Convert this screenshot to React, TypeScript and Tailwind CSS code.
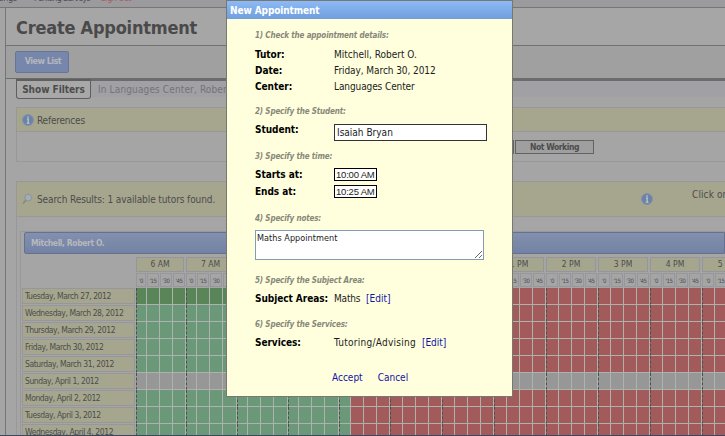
import { clsx } from "clsx";

const hours = [
  { label: "6 AM", cells: [11, 13, 13, 13] },
  { label: "7 AM", cells: [11, 13, 13, 14] },
  { label: "8 AM", cells: [11, 13, 13, 14] },
  { label: "9 AM", cells: [11, 13, 13, 14] },
  { label: "10 AM", cells: [12, 13, 13, 13] },
  { label: "11 AM", cells: [13, 13, 13, 13] },
  { label: "12 PM", cells: [13, 13, 13, 13] },
  { label: "1 PM", cells: [13, 13, 13, 13] },
  { label: "2 PM", cells: [13, 13, 13, 13] },
  { label: "3 PM", cells: [13, 13, 13, 13] },
  { label: "4 PM", cells: [13, 13, 13, 13] },
  { label: "5 PM", cells: [13, 13, 13, 13] },
];

const minutes = ["'0", "'15", "'30", "'45"];

const days = [
  "Tuesday, March 27, 2012",
  "Wednesday, March 28, 2012",
  "Thursday, March 29, 2012",
  "Friday, March 30, 2012",
  "Saturday, March 31, 2012",
  "Sunday, April 1, 2012",
  "Monday, April 2, 2012",
  "Tuesday, April 3, 2012",
  "Wednesday, April 4, 2012",
];

// availability ends after the first slot of 10 AM
function slotColor(day: number, slot: number) {
  if (day === 5) return "bg-[#979797]";
  if (slot > 16) return "bg-[#a35a5a]";
  return day === 0 ? "bg-[#5a8559]" : "bg-[#6a9878]";
}

export default function App() {
  return (
    <div className="relative h-[436px] w-[725px] overflow-hidden bg-[#a5a5a5] font-['DejaVu_Sans_Condensed','DejaVu_Sans',sans-serif] text-[10px] text-[#4c4c4c]">
      <div className="flex h-full flex-col">
        <nav className="flex h-[7px] shrink-0 items-end overflow-hidden bg-[#9b9b9e] text-[9px] leading-[12px]">
          <div className="flex pb-[3px] whitespace-nowrap">
            <span className="-ml-[14px] w-[48px] tracking-[-0.3px]">Settings</span>
            <span className="w-[67px] tracking-[-0.75px]">Pending Surveys</span>
            <span className="tracking-[-0.6px] text-[#a85c60]">Sign Out</span>
          </div>
        </nav>

        <div className="flex min-h-0 flex-1 flex-col border-t border-[#767676] pl-[5px]">
          <div className="flex min-h-0 flex-1 flex-col border-l border-[#767676]">
            <h1 className="flex h-[38px] shrink-0 items-center border-b border-[#707070] bg-[#a6a6a6] pt-px pl-[10px] text-[18px] font-bold tracking-[-0.22px] text-[#4a4a4a]">
              Create Appointment
            </h1>
            <div className="flex h-[32px] shrink-0 items-start bg-[#a0a0a0] pt-[5px] pl-[9px]">
              <button className="flex h-[22px] w-[54px] items-center justify-center rounded-[2px] border border-[#667598] bg-[#7787ac] pl-[2px] text-[9px] font-bold tracking-[-0.55px] text-[#b4b6bc]">
                View List
              </button>
            </div>

            <div className="flex min-h-0 flex-1 flex-col border-t border-[#6c6c6c] pl-[10px]">
              <FilterBar />
              <References />
              <Results />
            </div>
          </div>
        </div>
      </div>

      <AppointmentDialog />
      <div className="absolute inset-x-0 bottom-0 h-px bg-[#3a4568]" />
    </div>
  );
}

function FilterBar() {
  return (
    <div className="flex h-[20px] shrink-0 items-start">
      <div className="flex h-full w-[75px] shrink-0 items-center justify-center rounded-b-[3px] border border-t-2 border-[#5f5f5f] bg-[#a8a8a8] pb-px font-bold tracking-[-0.03px]">
        Show Filters
      </div>
      <div className="flex h-[18px] flex-1 items-center overflow-hidden border-t-2 border-[#6c6c6c] bg-[#a0a0a5] pt-px pl-[7px] tracking-[0.13px] whitespace-nowrap text-[#747476]">
        In Languages Center, Robert O. Mitchell
      </div>
    </div>
  );
}

function References() {
  return (
    <div className="mt-[8px] h-[55px] shrink-0 border-y border-l border-[#98989a]">
      <div className="flex h-[24px] items-center gap-[3px] border-b border-[#98989a] bg-[#a6a68e] pt-px pl-[5px]">
        <InfoIcon />
        <span className="tracking-[-0.2px]">References</span>
      </div>
      <div className="flex h-[30px] items-start pt-[8px] pl-[376px]">
        <div className="flex h-[14px] w-[120px] gap-px">
          <div className="w-[121px] shrink-0 border border-[#626262]" />
          <div className="flex w-[79px] shrink-0 items-center justify-center border border-[#626262] bg-[#9f9f9f] text-[8.5px] font-bold tracking-[-0.45px]">
            Not Working
          </div>
        </div>
      </div>
    </div>
  );
}

function Results() {
  return (
    <div className="mt-[19px] flex min-h-0 flex-1 flex-col border-t border-l border-[#98989a]">
      <div className="flex h-[35px] shrink-0 items-center border-b border-[#98989a] bg-[#a6a68e] pl-[4px]">
        <SearchIcon />
        <span className="ml-[4px] w-[604px] shrink-0 tracking-[-0.1px] whitespace-nowrap">
          Search Results: 1 available tutors found.
        </span>
        <InfoIcon />
        <span className="mb-[10px] ml-[39px] shrink-0 tracking-[0.1px] whitespace-nowrap">Click on</span>
      </div>
      <div className="mt-[14px] ml-[3px] flex min-h-0 flex-1 flex-col border-t border-l border-[#98989a]">
        <div className="ml-[3px] flex h-[22px] shrink-0 items-center rounded-l-[2px] border border-[#65718f] bg-linear-to-b from-[#8390ae] to-[#7382a4] pl-[6px] text-[8.5px] font-bold tracking-[-0.4px] text-[#b6b8be]">
          Mitchell, Robert O.
        </div>
        <Schedule />
      </div>
    </div>
  );
}

function Schedule() {
  return (
    <div className="mt-[3px] ml-px w-[740px] shrink-0 text-[8.5px]">
      <div className="flex pl-[114px]">
        {hours.map((h) => (
          <div key={h.label}>
            <div className="mr-[2px] flex h-[15px] items-center justify-center border border-[#96969a] bg-[#a6a68e]">
              {h.label}
            </div>
            <div className="flex h-[16px] pt-px">
              {h.cells.map((w, i) => (
                <div key={i} style={{ width: w }} className="pr-px">
                  <div className="flex h-[14px] items-center justify-center border border-[#96969b] text-[6px] tracking-[-0.5px]">
                    {minutes[i]}
                  </div>
                </div>
              ))}
            </div>
          </div>
        ))}
      </div>
      {days.map((day, d) => (
        <div key={day} className="flex h-[17px]">
          <div className="w-[114px] pr-px pb-px">
            <div className="flex h-[16px] items-center border border-[#96969b] bg-[#a6a68e] pl-[2px] tracking-[-0.42px] whitespace-nowrap">
              {day}
            </div>
          </div>
          {hours.map((h, hi) =>
            h.cells.map((w, i) => (
              <div
                key={hi + "-" + i}
                style={{ width: w }}
                className={clsx(
                  "shrink-0 border-r border-b border-b-[#adb2ad] border-r-[#adb2ad]",
                  i === 0 && "border-l border-l-[#4b504b] [border-left-style:dashed]",
                  slotColor(d, hi * 4 + i)
                )}
              />
            ))
          )}
        </div>
      ))}
    </div>
  );
}

function AppointmentDialog() {
  return (
    <div className="absolute top-0 left-[226px] flex h-[397px] w-[287px] flex-col border border-[#77796f] bg-[#ffffdd] leading-[16px] text-[#1c1c1c]">
      <div className="flex h-[18px] shrink-0 items-center bg-linear-to-b from-[#8dbaf6] to-[#6f9fdc] pt-px pl-[3px] font-bold tracking-[-0.1px] text-white">
        New Appointment
      </div>
      <div className="flex flex-1 flex-col pl-[28px]">
        <Step className="mt-[9px]">1) Check the appointment details:</Step>
        <div className="mt-[3px]">
          <Field label="Tutor:">Mitchell, Robert O.</Field>
          <Field label="Date:">
            <span className="tracking-[-0.07px]">Friday, March 30, 2012</span>
          </Field>
          <Field label="Center:">
            <span className="tracking-[-0.1px]">Languages Center</span>
          </Field>
        </div>

        <Step className="mt-[9px]">2) Specify the Student:</Step>
        <div className="mt-[2px]">
          <Field label="Student:">
            <div className="mt-[2px] flex h-[17px] w-[153px] items-center border border-[#333] bg-white pl-[2px]">Isaiah Bryan</div>
          </Field>
        </div>

        <Step className="mt-[11px]">3) Specify the time:</Step>
        <div className="mt-[2px] flex flex-col gap-px">
          <Field label="Starts at:">
            <TimeBox>10:00 AM</TimeBox>
          </Field>
          <Field label="Ends at:">
            <TimeBox>10:25 AM</TimeBox>
          </Field>
        </div>

        <Step className="mt-[11px]">4) Specify notes:</Step>
        <textarea
          className="mt-[3px] block h-[30px] w-[229px] shrink-0 resize-y overflow-hidden border border-[#7f9db9] bg-white pl-px text-[9px] leading-[14px] tracking-[0.05px] outline-none"
          defaultValue="Maths Appointment"
        />

        <Step className="mt-[13px]">5) Specify the Subject Area:</Step>
        <div className="mt-[2px]">
          <Field label="Subject Areas:">
            <span className="tracking-[-0.2px]">Maths</span> <EditLink />
          </Field>
        </div>

        <Step className="mt-[10px]">6) Specify the Services:</Step>
        <div className="mt-[2px]">
          <Field label="Services:">
            <span className="tracking-[0.27px]">Tutoring/Advising</span> <EditLink />
          </Field>
        </div>

        <div className="mt-[19px] flex gap-[15px] pl-[77px] text-[#1212a8]">
          <a>Accept</a>
          <a>Cancel</a>
        </div>
      </div>
    </div>
  );
}

function Step({ className, children }: { className?: string; children: React.ReactNode }) {
  return (
    <p className={clsx("h-[16px] shrink-0 text-[8px] font-bold tracking-[-0.15px] text-[#88887a] italic", className)}>
      {children}
    </p>
  );
}

function Field({ label, children }: { label: string; children: React.ReactNode }) {
  return (
    <div className="flex h-[16px] shrink-0">
      <span className="w-[79px] shrink-0 font-bold tracking-[-0.05px] text-black">{label}</span>
      <div className="whitespace-nowrap">{children}</div>
    </div>
  );
}

function TimeBox({ children }: { children: React.ReactNode }) {
  return (
    <div className="mt-px flex h-[13px] w-[43px] items-center border border-black bg-white pl-px font-['Liberation_Sans',sans-serif] text-[9.5px] leading-none tracking-[-0.2px]">
      {children}
    </div>
  );
}

function EditLink() {
  return <a className="ml-[3px] text-[#1212a8]">[Edit]</a>;
}

function InfoIcon() {
  return (
    <svg className="h-[12px] w-[12px] shrink-0" viewBox="0 0 12 12">
      <circle cx="6" cy="6" r="5.5" fill="#6c83a8" stroke="#8492a8" />
      <path d="M6 2.2v1.6M5 5h1.2v4M4.8 9.2h2.6" stroke="#b6bcc6" strokeWidth="1.5" fill="none" />
    </svg>
  );
}

function SearchIcon() {
  return (
    <svg className="h-[12px] w-[12px] shrink-0" viewBox="0 0 12 12">
      <path d="M2 10.5l3.2-3.4" stroke="#8f8474" strokeWidth="1.6" />
      <circle cx="7.2" cy="4.6" r="3.4" fill="#a3adb8" stroke="#8b929c" />
    </svg>
  );
}
